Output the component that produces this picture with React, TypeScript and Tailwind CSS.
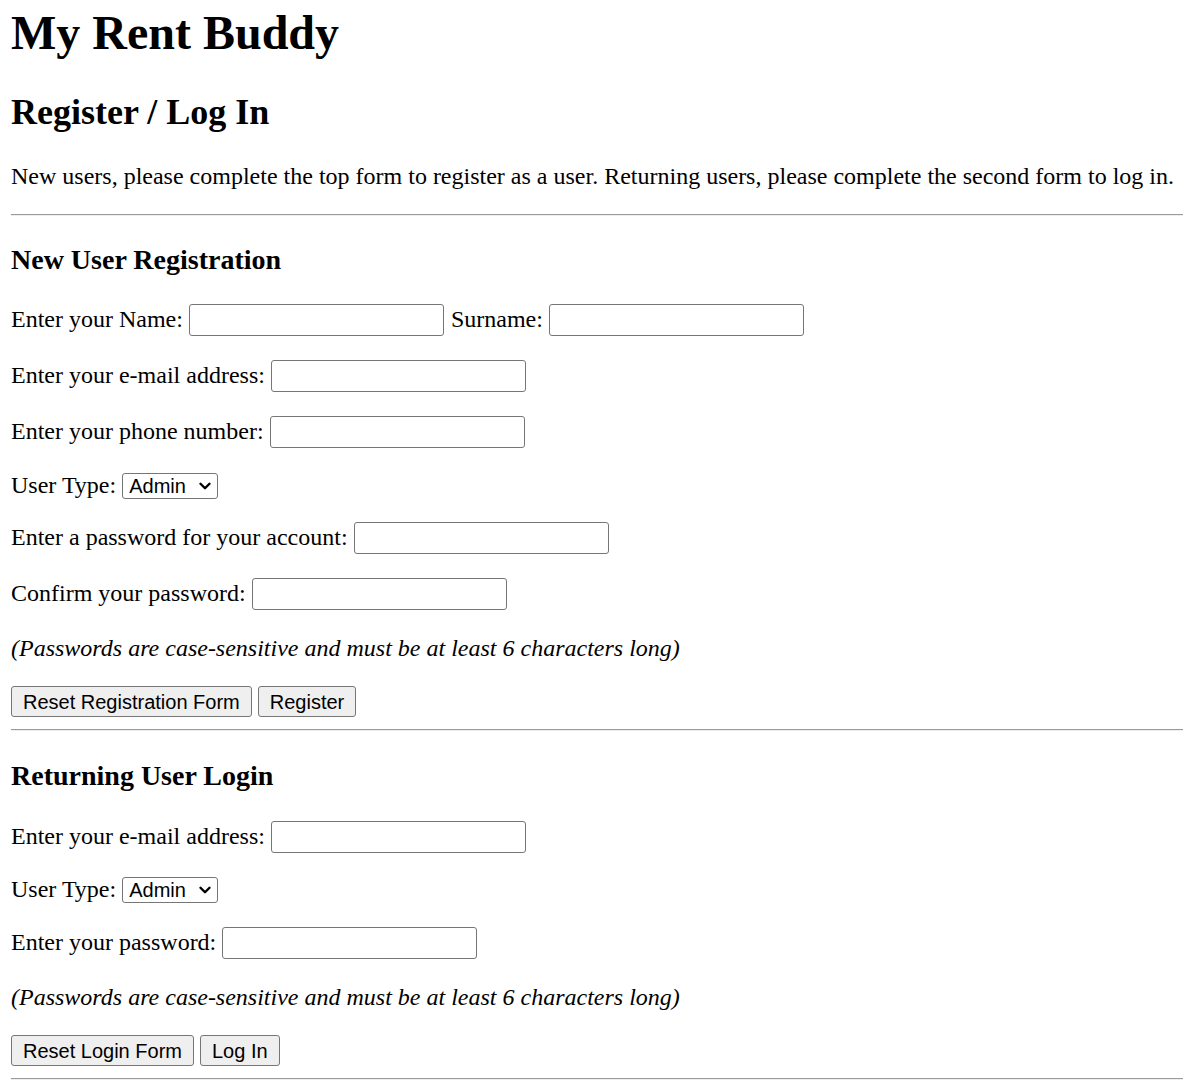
import { ChevronDown } from 'lucide-react'

const serif = { fontFamily: '"Liberation Serif", "Times New Roman", serif' }

function TextInput({ type = 'text' }: { type?: string }) {
  return (
    <input
      type={type}
      className="h-[32px] w-[255px] rounded-[3px] border border-[#767676] bg-white px-[3px] text-[20px] font-['Liberation_Sans',Arial,sans-serif] outline-none"
    />
  )
}

function UserTypeSelect() {
  return (
    <div className="relative flex h-[26px] w-[96px] items-center rounded-[3px] border border-[#767676] bg-white pl-[6px] font-['Liberation_Sans',Arial,sans-serif] text-[20px] leading-none text-black">
      Admin
      <ChevronDown className="absolute right-[3px] top-[3px] h-[18px] w-[18px]" strokeWidth={3.2} />
    </div>
  )
}

function Button({ label }: { label: string }) {
  return (
    <button className="h-[31px] rounded-[3px] border border-[#767676] bg-[#efefef] px-[11px] font-['Liberation_Sans',Arial,sans-serif] text-[20px] leading-none text-black">
      {label}
    </button>
  )
}

function Field({ label, mt, children }: { label: string; mt: string; children: React.ReactNode }) {
  return (
    <div className={`flex h-[32px] items-center gap-[6px] ${mt}`}>
      <span className="-mt-[2px]">{label}</span>
      {children}
    </div>
  )
}

function Rule({ mt }: { mt: string }) {
  return <div className={`h-[2px] border-t border-b border-t-[#9a9a9a] border-b-[#eeeeee] ${mt}`} />
}

function Note({ mt }: { mt: string }) {
  return (
    <p className={`flex h-[28px] items-center italic ${mt}`}>
      (Passwords are case-sensitive and must be at least 6 characters long)
    </p>
  )
}

export default function App() {
  return (
    <div className="min-h-[1090px] bg-white pl-[11px] pt-[9px] text-[24px] text-black" style={serif}>
      <h1 className="flex h-[48px] items-center text-[48px] font-bold leading-[48px]">My Rent Buddy</h1>
      <h2 className="mt-[37px] flex h-[36px] items-center text-[36px] font-bold leading-[36px]">Register / Log In</h2>
      <p className="mt-[32px] flex h-[28px] items-center">
        New users, please complete the top form to register as a user. Returning users, please complete the second form to log in.
      </p>
      <Rule mt="mt-[24px]" />

      <h3 className="mt-[30px] flex h-[28px] items-center text-[28px] font-bold">New User Registration</h3>
      <div className="mt-[30px] flex h-[32px] items-center gap-[6px]">
        <span className="-mt-[2px]">Enter your Name:</span>
        <TextInput />
        <span className="-mt-[2px] ml-[1px]">Surname:</span>
        <TextInput />
      </div>
      <Field label="Enter your e-mail address:" mt="mt-[24px]">
        <TextInput type="email" />
      </Field>
      <Field label="Enter your phone number:" mt="mt-[24px]">
        <TextInput type="tel" />
      </Field>
      <div className="mt-[25px] flex h-[26px] items-center gap-[6px]">
        <span className="-mt-[2px]">User Type:</span>
        <UserTypeSelect />
      </div>
      <Field label="Enter a password for your account:" mt="mt-[23px]">
        <TextInput type="password" />
      </Field>
      <Field label="Confirm your password:" mt="mt-[24px]">
        <TextInput type="password" />
      </Field>
      <Note mt="mt-[24px]" />
      <div className="mt-[24px] flex gap-[6px]">
        <Button label="Reset Registration Form" />
        <Button label="Register" />
      </div>
      <Rule mt="mt-[12px]" />

      <h3 className="mt-[31px] flex h-[28px] items-center text-[28px] font-bold">Returning User Login</h3>
      <Field label="Enter your e-mail address:" mt="mt-[31px]">
        <TextInput type="email" />
      </Field>
      <div className="mt-[24px] flex h-[26px] items-center gap-[6px]">
        <span className="-mt-[2px]">User Type:</span>
        <UserTypeSelect />
      </div>
      <Field label="Enter your password:" mt="mt-[24px]">
        <TextInput type="password" />
      </Field>
      <Note mt="mt-[24px]" />
      <div className="mt-[24px] flex gap-[6px]">
        <Button label="Reset Login Form" />
        <Button label="Log In" />
      </div>
      <Rule mt="mt-[12px]" />
    </div>
  )
}
